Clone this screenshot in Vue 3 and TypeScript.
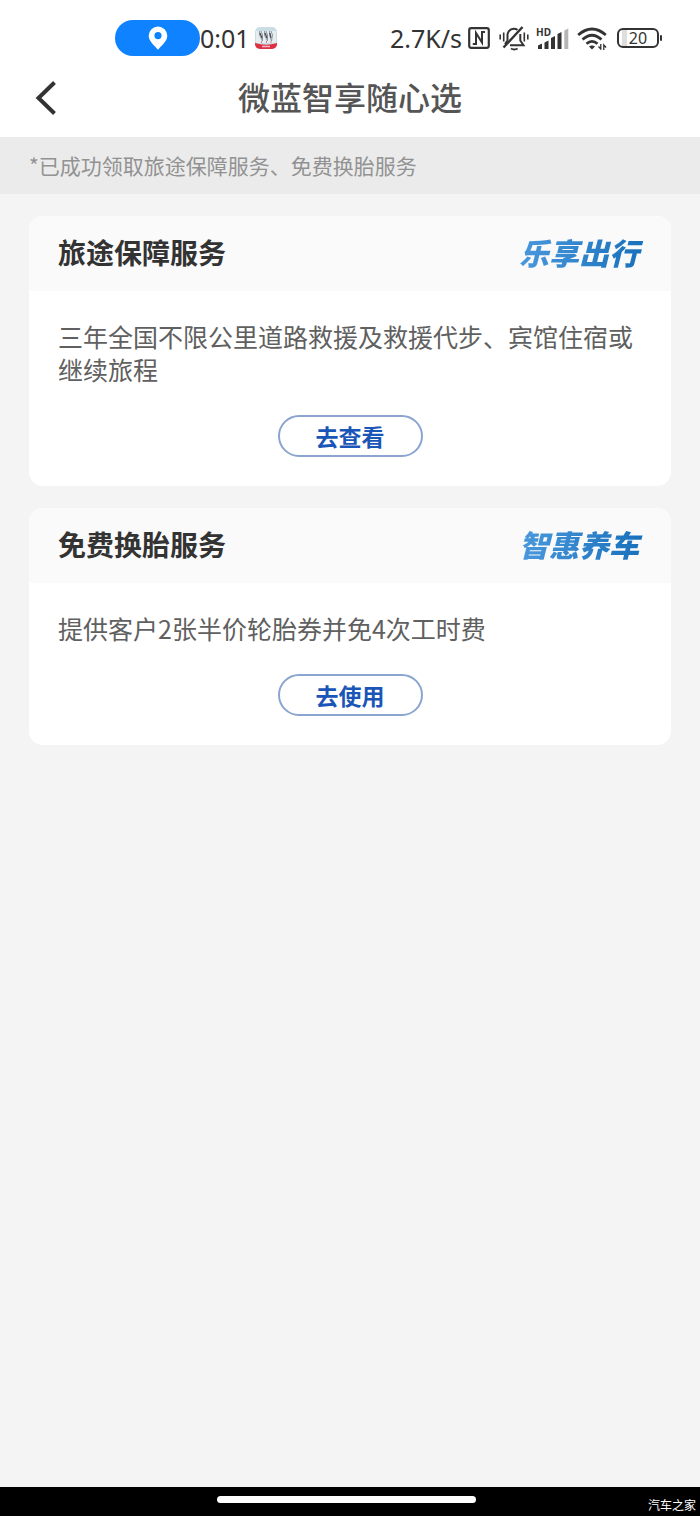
<script setup lang="ts">
interface Service {
  id: string
  title: string
  tag: string
  description: string
  action: string
}

const notice = '*已成功领取旅途保障服务、免费换胎服务'

const services: Service[] = [
  {
    id: 'travel',
    title: '旅途保障服务',
    tag: '乐享出行',
    description: '三年全国不限公里道路救援及救援代步、宾馆住宿或继续旅程',
    action: '去查看',
  },
  {
    id: 'tire',
    title: '免费换胎服务',
    tag: '智惠养车',
    description: '提供客户2张半价轮胎券并免4次工时费',
    action: '去使用',
  },
]
</script>

<template>
  <div class="screen">
    <div class="status">
      <div class="status-left">
        <span class="location">
          <svg width="20" height="24" viewBox="0 0 20 24" aria-hidden="true">
            <path fill="#fff" fill-rule="evenodd" d="M10 0.5a9.3 9.3 0 0 0-9.3 9.2c0 5.6 5.3 9.2 9.3 14 4-4.8 9.3-8.4 9.3-14A9.3 9.3 0 0 0 10 .5zM10 6a3.6 3.6 0 1 1 0 7.200a3.600 3.600 0 0 1 0-7.200z" />
          </svg>
        </span>
        <span class="time">0:01</span>
        <svg class="app-icon" width="22" height="22" viewBox="0 0 22 22" aria-hidden="true">
          <defs>
            <clipPath id="app-clip"><rect width="22" height="22" rx="5" /></clipPath>
          </defs>
          <g clip-path="url(#app-clip)">
            <rect width="22" height="22" fill="#cbdde4" />
            <path d="M1 4h20v12H1z" fill="#e5edef" />
            <path d="M0 16q11 3.500 22 0v6H0z" fill="#dc3043" />
            <path d="M7 19.500h8" stroke="#f6b9bf" stroke-width="1.500" />
            <path d="M4.500 4v4l3 6V8L6 4M9.500 4v4l3 6V8L11 4M14.500 4v4l2 6 1-6-1.500-4" fill="none" stroke="#8a97a1" />
            <path d="M5 6l2 5M10 6l2 5M15 6l1 5" stroke="#4c4650" stroke-width="1.200" />
            <path d="M6.500 14v2M11.500 14v2M16 14v2" stroke="#d67d89" />
          </g>
        </svg>
      </div>
      <div class="status-right">
        <span class="speed">2.7K/s</span>
        <svg class="nfc" width="22" height="22" viewBox="0 0 22 22" fill="none" stroke="#333" aria-hidden="true">
          <rect x="1.200" y="1.200" width="19.600" height="19.600" rx="2" stroke-width="2.200" />
          <path d="M4.800 17H8V6l6 9.500V5h3" stroke-width="2" />
        </svg>
        <svg class="bell" width="30" height="26" viewBox="0 0 30 26" fill="none" stroke="#333" stroke-width="2" aria-hidden="true">
          <path d="M8.500 15.500V9.800a6.500 6.500 0 0 1 10-5M21.300 9v6.500l3.200 4.700H11M6 19l2.500-3.500" />
          <path d="M4.500 22.500L23.500 2" stroke-width="2.400" />
          <path d="M12 23.500q3.300 2 6.600 0" />
          <path d="M1.200 9.500v5M4.700 7.500v9M25.300 7.500v9M28.800 9.500v5" stroke-width="1.600" />
        </svg>
        <div class="signal">
          <span class="hd">HD</span>
          <svg width="33" height="23" viewBox="0 0 33 23" aria-hidden="true">
            <path fill="#333" d="M2 18.500l4-2V22H2zM8.500 15.500l4-2V22h-4zM15 11l4-2v13h-4zM21.500 7l4-2v17h-4z" />
            <path fill="#b5b5b5" d="M28.300 3.500l4-2V22h-4z" />
          </svg>
        </div>
        <svg class="wifi" width="31" height="23" viewBox="0 0 31 23" aria-hidden="true">
          <g fill="none" stroke="#333" stroke-width="2.800">
            <path d="M1.200 8Q15 -4 28.800 8" />
            <path d="M5.500 12.500Q15 4 24.500 12.500" />
            <path d="M9.500 16.800Q15 12 20.500 16.800" />
          </g>
          <path d="M12 19.600q3-2.400 6 0L15 22.500z" fill="#333" />
          <path d="M23.800 17v5l-2.300-2.500M26.800 23v-5l2.300 2.500" fill="none" stroke="#333" stroke-width="1.300" />
        </svg>
        <span class="battery"><span class="battery-body">20</span><span class="battery-cap"></span></span>
      </div>
    </div>

    <header class="navbar">
      <button class="back" type="button" aria-label="返回">
        <svg width="22" height="36" viewBox="0 0 22 36" fill="none" stroke="#333" stroke-width="4" aria-hidden="true">
          <path d="M19.500 2.500L3.500 18l16 15.500" />
        </svg>
      </button>
      <h1>微蓝智享随心选</h1>
    </header>

    <p class="notice">{{ notice }}</p>

    <main class="list">
      <section v-for="item in services" :key="item.id" class="card">
        <div class="card-head">
          <h2>{{ item.title }}</h2>
          <span class="tag">{{ item.tag }}</span>
        </div>
        <div class="card-body">
          <p>{{ item.description }}</p>
          <button class="action" type="button">{{ item.action }}</button>
        </div>
      </section>
    </main>

    <footer class="bottom">
      <span class="handle"></span>
      <span class="brand">汽车之家</span>
    </footer>
  </div>
</template>

<style>
body {
  margin: 0;
  background: #f4f4f4;
}
</style>

<style scoped>
.screen {
  display: flex;
  flex-direction: column;
  min-height: 100vh;
  background: #f4f4f4;
  color: #333;
  font-family: "Noto Sans CJK SC", sans-serif;
}

h1,
h2,
p {
  margin: 0;
}

button {
  font-family: inherit;
  cursor: pointer;
}

svg {
  display: block;
  flex: none;
}

.status {
  display: flex;
  justify-content: space-between;
  align-items: center;
  height: 76px;
  padding: 0 38px 0 115px;
  background: #fff;
  font-family: "Noto Sans", sans-serif;
}

.status-left,
.status-right {
  display: flex;
  align-items: center;
}

.location {
  display: flex;
  align-items: center;
  justify-content: center;
  width: 85px;
  height: 36px;
  border-radius: 18px;
  background: #0f82ff;
}

.time,
.speed {
  font-size: 25px;
  line-height: 36px;
}

.app-icon {
  margin-left: 5px;
}

.nfc {
  margin-left: 6px;
}

.bell {
  margin-left: 9px;
}

.signal {
  position: relative;
  margin-left: 7px;
}

.hd {
  position: absolute;
  top: -2px;
  left: 0;
  font-size: 10px;
  font-weight: 700;
  line-height: 14px;
}

.wifi {
  margin-left: 8px;
}

.battery {
  display: flex;
  align-items: center;
  gap: 1px;
  margin-left: 9px;
}

.battery-body {
  box-sizing: border-box;
  width: 42px;
  height: 20px;
  border: 2px solid #333;
  border-radius: 6px;
  background: linear-gradient(90deg, #fff 3px, #dedede 3px, #dedede 8px, #fff 8px);
  font-size: 16px;
  line-height: 16px;
  text-align: center;
}

.battery-cap {
  width: 2px;
  height: 6px;
  border-radius: 1px;
  background: #333;
}

.navbar {
  display: grid;
  grid-template-columns: 72px 1fr 72px;
  align-items: start;
  height: 61px;
  background: #fff;
}

.back {
  justify-self: start;
  padding: 4px 15px 0 35px;
  border: 0;
  background: none;
}

h1 {
  color: #555;
  font-size: 32px;
  font-weight: 500;
  line-height: 40px;
  text-align: center;
}

.notice {
  padding: 12px 29px;
  background: #ebebeb;
  color: #929292;
  font-size: 21px;
  line-height: 33px;
}

.list {
  display: flex;
  flex: 1;
  flex-direction: column;
  gap: 22px;
  padding: 22px 29px;
}

.card {
  overflow: hidden;
  border-radius: 14px;
  background: #fff;
}

.card-head {
  display: flex;
  align-items: center;
  justify-content: space-between;
  box-sizing: border-box;
  height: 75px;
  padding: 0 24px 3px 29px;
  background: #fafafa;
}

h2 {
  color: #333;
  font-size: 28px;
  font-weight: 700;
  line-height: 40px;
}

.tag {
  padding: 0 8px 0 4px;
  background: linear-gradient(90deg, #4c9ade, #166fba);
  background-clip: text;
  -webkit-background-clip: text;
  color: transparent;
  font-size: 30px;
  font-style: italic;
  font-weight: 900;
  line-height: 40px;
}

.card-body {
  display: flex;
  flex-direction: column;
  align-items: center;
  gap: 29px;
  padding: 29px;
}

.card-body p {
  align-self: stretch;
  color: #606060;
  font-size: 25px;
  line-height: 33px;
}

.action {
  box-sizing: border-box;
  width: 145px;
  height: 42px;
  padding: 0;
  border: 2px solid #8aa5cf;
  border-radius: 21px;
  background: #fff;
  color: #1a55b8;
  font-size: 23px;
  font-weight: 700;
  line-height: 36px;
}

.bottom {
  display: grid;
  grid-template-columns: 31% 37% 1fr;
  height: 29px;
  background: #000;
}

.handle {
  grid-column: 2;
  height: 7px;
  margin-top: 9px;
  border-radius: 4px;
  background: #fff;
}

.brand {
  justify-self: end;
  align-self: end;
  padding-right: 4px;
  color: #fff;
  font-size: 12px;
  line-height: 22px;
}
</style>
